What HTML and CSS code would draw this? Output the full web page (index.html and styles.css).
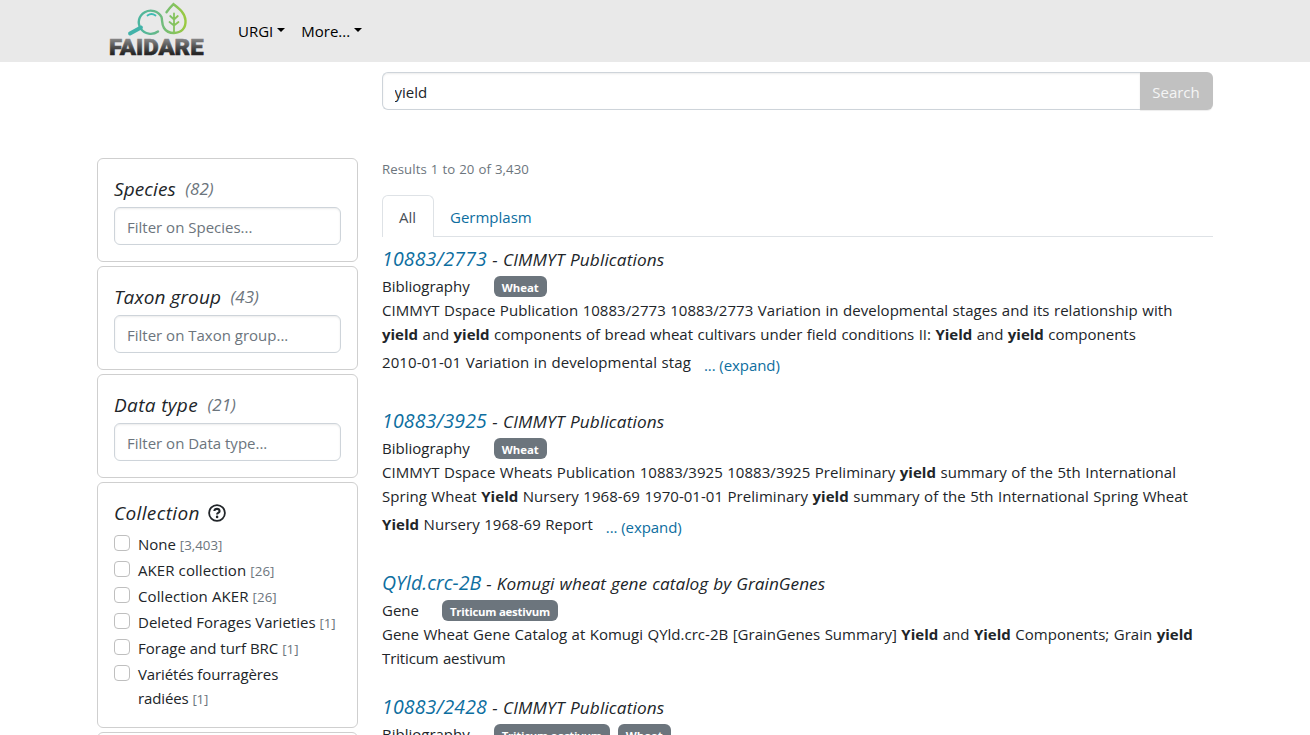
FILE: index.html
```html
<!DOCTYPE html>
<html lang="en">
<head>
<meta charset="utf-8">
<title>FAIDARE</title>
<link rel="stylesheet" href="styles.css">
</head>
<body>
<header class="navbar">
  <div class="container nav-inner">
    <svg class="logo" width="98" height="60" viewBox="0 0 98 60" role="img" aria-label="FAIDARE">
      <defs>
        <linearGradient id="green" gradientUnits="userSpaceOnUse" x1="20" y1="0" x2="80" y2="0">
          <stop offset="0" stop-color="#3db3ac"/><stop offset=".5" stop-color="#68b987"/><stop offset="1" stop-color="#9fcb3a"/>
        </linearGradient>
        <linearGradient id="steel" gradientUnits="userSpaceOnUse" x1="0" y1="39" x2="0" y2="56">
          <stop offset="0" stop-color="#858585"/><stop offset=".85" stop-color="#262626"/>
        </linearGradient>
      </defs>
      <g fill="none" stroke="url(#green)" stroke-width="2.4" stroke-linecap="round">
        <path d="M50 31.500A12 11.600 0 1 1 53.500 17C54.500 20.500 53.500 24 56 28C58.500 32 62 33 66 33C73.500 33 78 28 77.500 20.500C77 13 71 8.500 65.500 4.200C62.500 7 60.500 9.500 58.500 12.300"/>
        <path d="M39.500 15.500Q43.500 12.500 47.500 15.500" stroke="#3fbcb4" stroke-width="1.800"/>
        <path d="M66 13.500V32M66 19.500l-3.800-3.500M66 19.500l3.800-3.500M66 25.500l-4.500-3.500M66 25.500l4.500-3.500" stroke-width="1.800"/>
        <path d="M33 27.500L22 33.500" stroke="#42b3aa" stroke-width="3.800"/>
      </g>
      <text class="logo-text" x="1" y="55" textLength="94.500" lengthAdjust="spacingAndGlyphs" fill="url(#steel)" stroke="url(#steel)" stroke-width=".6">FAIDARE</text>
    </svg>
    <nav class="menu"><a>URGI<i class="caret"></i></a><a>More...<i class="caret"></i></a></nav>
  </div>
</header>

<div class="container search-row">
  <form class="search"><input class="search-input" value="yield" aria-label="Search"><button class="search-button" type="button">Search</button></form>
</div>

<div class="container columns">
  <aside class="facets">
    <section class="card"><h2 class="facet-title">Species<small class="count">(82)</small></h2><input class="filter" placeholder="Filter on Species..."></section>
    <section class="card"><h2 class="facet-title">Taxon group<small class="count">(43)</small></h2><input class="filter" placeholder="Filter on Taxon group..."></section>
    <section class="card"><h2 class="facet-title wide">Data type<small class="count">(21)</small></h2><input class="filter" placeholder="Filter on Data type..."></section>
    <section class="card">
      <h2 class="facet-title wide">Collection
        <svg class="help" width="18" height="18" viewBox="0 0 18 18"><circle cx="9" cy="9" r="7.900" fill="none" stroke="#212529" stroke-width="1.800"/><path d="M6.300 7Q6.500 4.900 9 4.900T11.600 7Q11.600 8.200 10.200 8.900Q9.100 9.500 9.100 10.600" fill="none" stroke="#212529" stroke-width="2.100"/><circle cx="9.100" cy="12.900" r="1.300" fill="#212529"/></svg>
      </h2>
      <label class="option"><input type="checkbox"><span>None <small>[3,403]</small></span></label>
      <label class="option"><input type="checkbox"><span class="airiest">AKER collection <small>[26]</small></span></label>
      <label class="option"><input type="checkbox"><span class="airiest">Collection AKER <small>[26]</small></span></label>
      <label class="option"><input type="checkbox"><span>Deleted Forages Varieties <small>[1]</small></span></label>
      <label class="option"><input type="checkbox"><span>Forage and turf BRC <small>[1]</small></span></label>
      <label class="option tight"><input type="checkbox"><span>Variétés fourragères<br>radiées <small>[1]</small></span></label>
    </section>
    <section class="card card-edge"></section>
  </aside>

  <main class="results">
    <p class="summary">Results 1 to 20 of 3,430</p>
    <div class="tabs"><a class="tab active">All</a><a class="tab">Germplasm</a></div>

    <article class="result">
      <h3 class="result-title"><a class="doc">10883/2773</a> - CIMMYT Publications</h3>
      <div class="meta"><span class="kind">Bibliography</span><span class="badge">Wheat</span></div>
      <div class="line airy">CIMMYT Dspace Publication 10883/2773 10883/2773 Variation in developmental stages and its relationship with</div>
      <div class="line"><b>yield</b> and <b>yield</b> components of bread wheat cultivars under field conditions II: <b>Yield</b> and <b>yield</b> components</div>
      <div class="last-line"><span class="line airiest">2010-01-01 Variation in developmental stag</span><a class="expand">... (expand)</a></div>
    </article>

    <article class="result">
      <h3 class="result-title"><a class="doc">10883/3925</a> - CIMMYT Publications</h3>
      <div class="meta"><span class="kind">Bibliography</span><span class="badge">Wheat</span></div>
      <div class="line airy">CIMMYT Dspace Wheats Publication 10883/3925 10883/3925 Preliminary <b>yield</b> summary of the 5th International</div>
      <div class="line airy">Spring Wheat <b>Yield</b> Nursery 1968-69 1970-01-01 Preliminary <b>yield</b> summary of the 5th International Spring Wheat</div>
      <div class="last-line"><span class="line airy"><b>Yield</b> Nursery 1968-69 Report</span><a class="expand">... (expand)</a></div>
    </article>

    <article class="result">
      <h3 class="result-title catalog"><a class="doc">QYld.crc-2B</a> - Komugi wheat gene catalog by GrainGenes</h3>
      <div class="meta"><span class="kind short">Gene</span><span class="badge binomial">Triticum aestivum</span></div>
      <div class="line slight">Gene Wheat Gene Catalog at Komugi QYld.crc-2B [GrainGenes Summary] <b>Yield</b> and <b>Yield</b> Components; Grain <b>yield</b></div>
      <div class="line tight">Triticum aestivum</div>
    </article>

    <article class="result">
      <h3 class="result-title"><a class="doc">10883/2428</a> - CIMMYT Publications</h3>
      <div class="meta"><span class="kind">Bibliography</span><span class="badge binomial">Triticum aestivum</span><span class="badge">Wheat</span></div>
    </article>
  </main>
</div>
</body>
</html>
```
FILE: styles.css
```css
* { box-sizing: border-box; }
html, body { height: 735px; overflow: hidden; }
body { margin: 0; background: #fff; color: #212529; font: 15px/24px "Open Sans", "Noto Sans", sans-serif; }
input, button { font: inherit; }
.container { width: 1140px; margin: 0 auto; padding: 0 12px; }
.navbar { height: 62px; background: #e9e9e9; }
.nav-inner { display: flex; align-items: flex-start; }
.logo { margin-left: 11px; flex: none; }
.logo-text { font: 900 22.5px Roboto, sans-serif; }
.menu { display: flex; gap: 16px; margin: 19px 0 0 32px; color: #000; }
.menu a { display: flex; align-items: center; white-space: nowrap; }
.caret { margin: -3px 0 0 4px; border: 4.5px solid transparent; border-top-color: #000; border-bottom: 0; }
.search-row { padding-top: 10px; }
.search { display: flex; height: 38px; margin: 0 0 0 285px; }
.search-input { flex: 1; min-width: 0; padding: 3px 11.5px 1px; color: #212529; border: 1px solid #ced4da; border-right: 0; border-radius: 6px 0 0 6px; box-shadow: inset 0 1px 2px rgba(0,0,0,.075); background: #fff; }
.search-button { width: 73px; padding: 1px 1px 0 0; border: 0; border-radius: 0 6px 6px 0; background: #c1c1c1; color: #f5f5f5; box-shadow: 0 1px 1px rgba(0,0,0,.075); }
.columns { display: flex; gap: 24px; margin-top: 48px; }
.facets { width: 261px; flex: none; display: flex; flex-direction: column; gap: 4px; }
.card { border: 1px solid #cfcfcf; border-radius: 6px; padding: 16px; }
.card-edge { height: 104px; }
.facet-title { display: flex; align-items: center; height: 24px; margin: 3px 0 5px; padding-bottom: 3px; font-size: 19px; font-weight: 400; font-style: italic; line-height: 24px; letter-spacing: .1px; white-space: nowrap; }
.wide { letter-spacing: .35px; }
.count { margin-left: 9.5px; font-size: 17px; letter-spacing: 0; color: #6c757d; }
.help { margin-left: 8px; }
.filter { display: block; width: 227px; height: 38px; padding: 3px 12px 1px; border: 1px solid #ced4da; border-radius: 6px; box-shadow: inset 0 1px 2px rgba(0,0,0,.075); }
.filter::placeholder { color: #6c757d; }
.option { display: flex; height: 24px; margin-bottom: 2px; white-space: nowrap; }
.option:first-of-type { margin-top: 6px; }
.option:last-child { height: 48px; margin-bottom: 1px; }
.option input { appearance: none; flex: none; width: 16px; height: 16px; margin: 3px 8px 0 0; border: 1px solid #bfbfbf; border-radius: 4px; }
.option small { font-size: 13.3px; line-height: 0; color: #6c757d; }
.results { width: 831px; }
.summary { margin: 0; height: 37px; font-size: 13.2px; line-height: 23px; letter-spacing: .08px; word-spacing: .5px; color: #6c757d; }
.tabs { display: flex; height: 42px; border-bottom: 1px solid #dee2e6; }
.tab { padding: 10px 16px; color: #0d6ea0; }
.tab.active { width: 52px; height: 42px; padding: 9px 16px; color: #495057; background: #fff; border: 1px solid #dee2e6; border-bottom: 0; border-radius: 6px 6px 0 0; }
.result { margin: 10px 0 25px; }
.result + .result { margin-top: 0; }
.result-title { margin: 0 0 3px; height: 24px; font-size: 17.2px; font-weight: 400; font-style: italic; line-height: 24px; letter-spacing: .15px; word-spacing: .6px; white-space: nowrap; }
.catalog { letter-spacing: .03px; }
.doc { font-size: 19.5px; }
.doc, .expand { color: #0d6ea0; }
.meta { display: flex; align-items: center; height: 24px; }
.kind { margin-right: 24px; }
.short { margin-right: 23px; }
.badge { height: 21px; margin-right: 8px; padding: 1px 8px; border-radius: 6px; background: #6c757d; color: #fff; font-size: 11.4px; font-weight: 700; line-height: 21px; }
.binomial { letter-spacing: -.24px; }
.line { word-spacing: .5px; white-space: nowrap; }
.slight { letter-spacing: .02px; }
.airy { letter-spacing: .045px; }
.airiest { letter-spacing: .09px; }
.tight { letter-spacing: -.12px; }
.last-line { display: flex; height: 38px; padding-top: 4px; }
.expand { margin: 3px 0 0 13px; letter-spacing: -.08px; }
```
